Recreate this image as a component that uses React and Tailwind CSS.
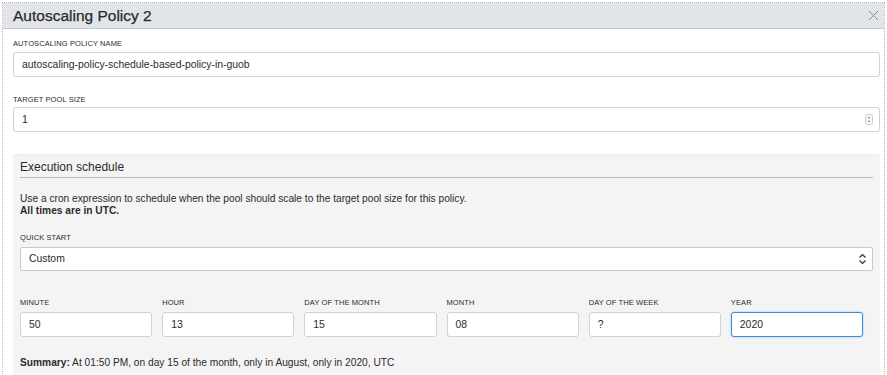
import React from "react";

const Label = ({ children, className = "" }) => (
  <div className={`text-[7.5px] leading-[10px] text-[#2b2b2b] uppercase tracking-[0.1px] ${className}`}>{children}</div>
);

const Field = ({ value, className = "", children }) => (
  <div
    className={`h-[25px] flex items-center justify-between pl-[8px] pr-[6px] bg-white border border-[#cfd2d6] rounded-[3px] text-[10.4px] text-[#2b2b2b] ${className}`}
  >
    <span>{value}</span>
    {children}
  </div>
);

const cron = [
  ["Minute", "50"],
  ["Hour", "13"],
  ["Day of the month", "15"],
  ["Month", "08"],
  ["Day of the week", "?"],
  ["Year", "2020"],
];

export default function App() {
  return (
    <div className="w-[887px] h-[375px] overflow-hidden bg-white pt-[2px] px-[2px] font-['Liberation_Sans',Arial,sans-serif]">
      <div className="h-[400px] border-t border-x border-dotted border-[#b3b7bd]">
        <div className="h-[26px] bg-[#e1e4e8] border-b border-[#c3c7cc] flex items-center justify-between pl-[10px] pr-[5px]">
          <span className="text-[15.5px] leading-[18px] text-[#2a2a2a] [-webkit-text-stroke:0.25px_#2a2a2a]">Autoscaling Policy 2</span>
          <svg width="11" height="11" viewBox="0 0 11 11">
            <path d="M1 1 L10 10 M10 1 L1 10" stroke="#8a8d91" strokeWidth="1" fill="none" />
          </svg>
        </div>
        <div className="pl-[10px] pr-[4px]">
          <Label className="mt-[10px] mb-[3px]">Autoscaling policy name</Label>
          <Field value="autoscaling-policy-schedule-based-policy-in-guob" />
          <Label className="mt-[18px] mb-[2px]">Target pool size</Label>
          <Field value="1">
            <svg width="8" height="11" viewBox="0 0 8 11">
              <rect x="0.5" y="0.5" width="7" height="10" rx="2" fill="#fafafa" stroke="#c9c9c9" />
              <path d="M2.5 4.2 L4 2.7 L5.5 4.2 Z" fill="#777" />
              <path d="M2.5 6.8 L4 8.3 L5.5 6.8 Z" fill="#777" />
            </svg>
          </Field>

          <div className="mt-[22px] bg-[#f4f4f4] rounded-t-[4px] border-t border-dotted border-[#e2e2e2] pt-[4px] px-[7px] h-[240px]">
            <div className="text-[12px] leading-[16px] text-[#2a2a2a] pb-[2px] border-b border-[#b9bcc1]">Execution schedule</div>
            <div className="mt-[15px] text-[10.2px] leading-[12px] text-[#2b2b2b]">
              <div>Use a cron expression to schedule when the pool should scale to the target pool size for this policy.</div>
              <div className="font-bold">All times are in UTC.</div>
            </div>
            <Label className="mt-[16px] mb-[4px]">Quick start</Label>
            <div className="h-[24px] flex items-center justify-between pl-[8px] pr-[5px] bg-white border border-[#c6cacf] rounded-[2px] text-[10.4px] text-[#2b2b2b]">
              <span>Custom</span>
              <svg width="9" height="12" viewBox="0 0 9 12">
                <path d="M1.5 4.5 L4.5 1.5 L7.5 4.5" stroke="#333" strokeWidth="1.2" fill="none" />
                <path d="M1.5 7.5 L4.5 10.5 L7.5 7.5" stroke="#333" strokeWidth="1.2" fill="none" />
              </svg>
            </div>
            <div className="mt-[27px] grid grid-cols-6">
              {cron.map(([l, v], i) => (
                <div key={l} className="pr-[10px]">
                  <Label className="mb-[4px]">{l}</Label>
                  {i === 5 ? (
                    <div className="h-[25px] flex items-center pl-[8px] bg-white border-[1.5px] border-[#3d8fe0] rounded-[3px] shadow-[0_0_2px_rgba(61,143,224,0.6)] text-[10.4px] text-[#2b2b2b]">
                      {v}
                    </div>
                  ) : (
                    <Field value={v} />
                  )}
                </div>
              ))}
            </div>
            <div className="mt-[19px] text-[10.2px] leading-[14px] text-[#2b2b2b]">
              <span className="font-bold">Summary:</span> At 01:50 PM, on day 15 of the month, only in August, only in 2020, UTC
            </div>
          </div>
        </div>
      </div>
    </div>
  );
}
